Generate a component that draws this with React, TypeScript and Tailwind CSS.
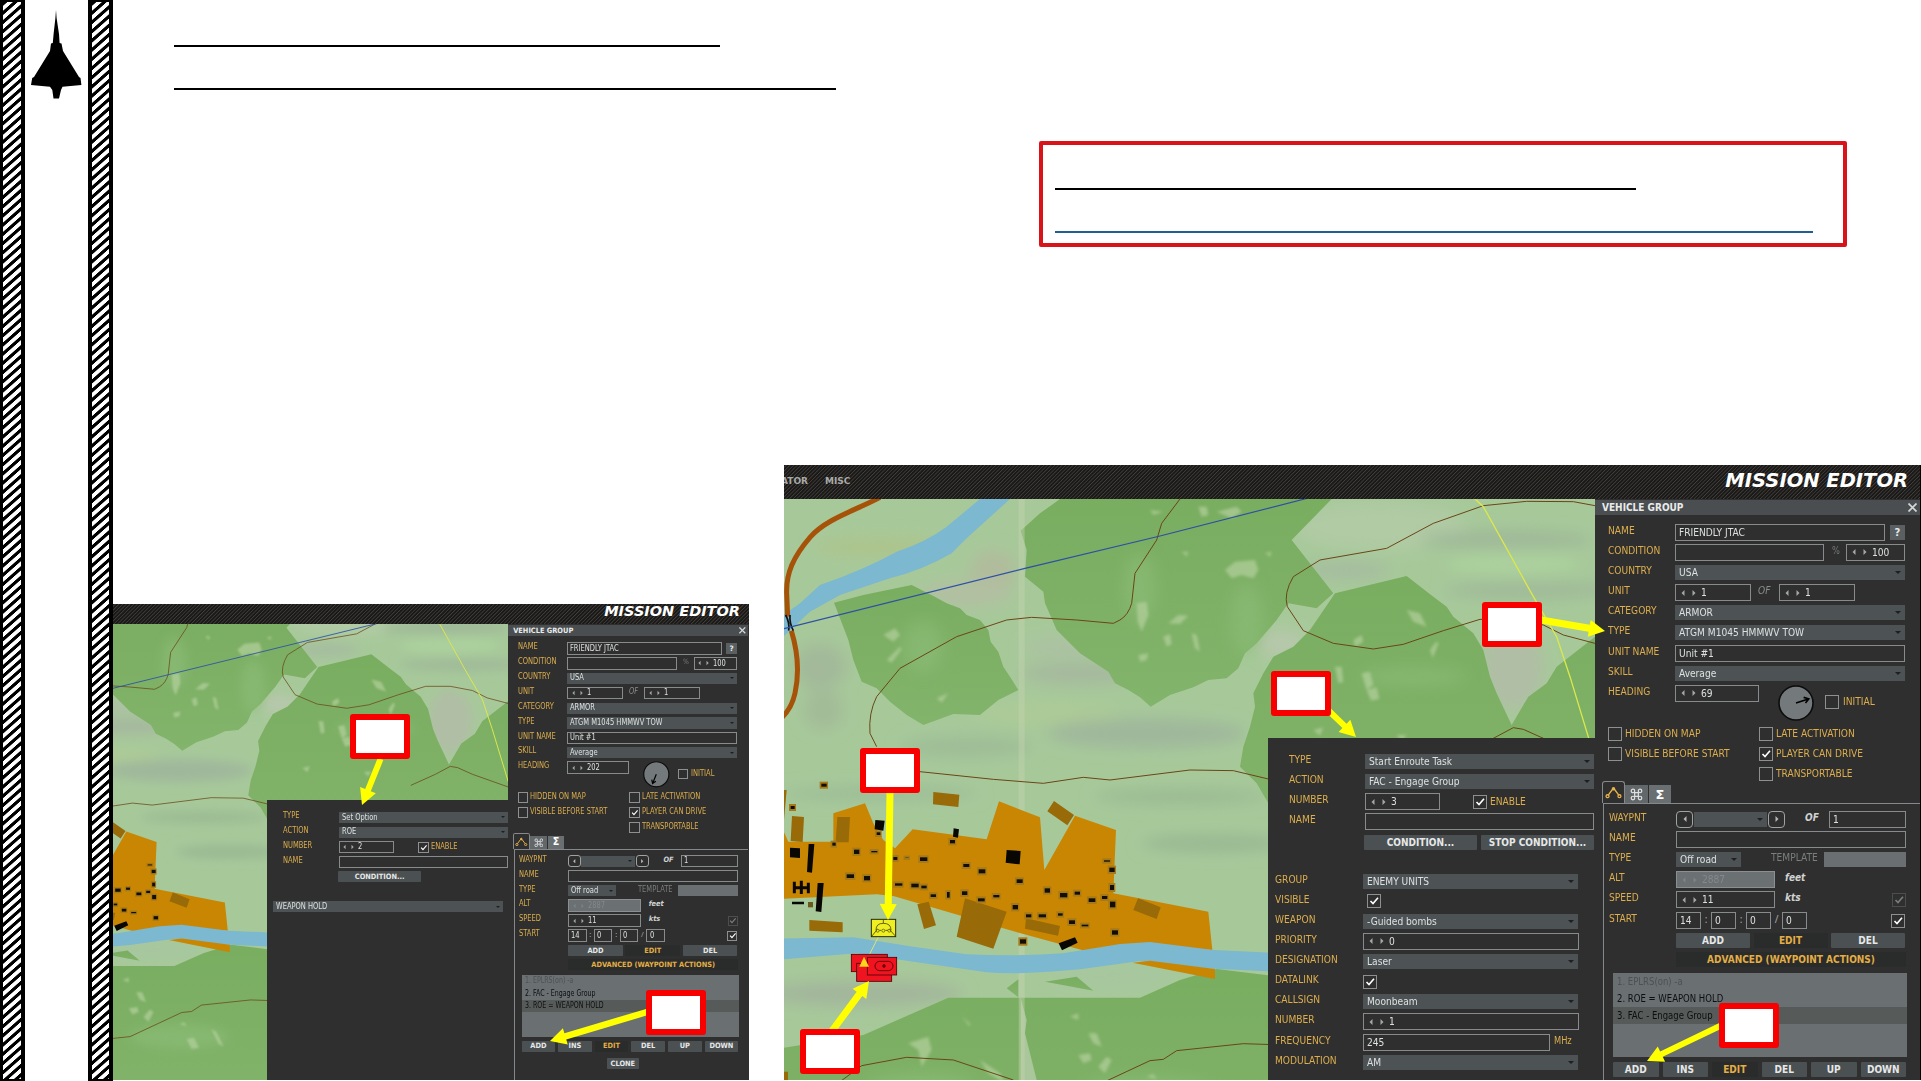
import React from "react";

const Check = ({ on, dim, className = "" }: { on?: boolean; dim?: boolean; className?: string }) => (
  <span className={`flex size-[14px] shrink-0 items-center justify-center border ${dim ? "border-[#4c4e4e]" : "border-[#8d9090]"} ${className}`}>
    {on && (
      <svg viewBox="0 0 10 10" className="size-[10px]" fill="none" stroke={dim ? "#7b7e7e" : "#ffffff"} strokeWidth="1.6">
        <path d="M1.5 5 L4 7.6 L9 1.8" />
      </svg>
    )}
  </span>
);

const Txt = ({ children, className = "" }: { children: React.ReactNode; className?: string }) => (
  <span className={`block origin-left scale-x-[0.92] whitespace-pre font-['DejaVu_Sans_Condensed','DejaVu_Sans',sans-serif] text-[11px] leading-[13px] [font-stretch:condensed] ${className}`}>{children}</span>
);

const Label = ({ children, w = "w-[67px]" }: { children: React.ReactNode; w?: string }) => (
  <span className={`${w} shrink-0`}>
    <Txt className="text-[#dcae4e]">{children}</Txt>
  </span>
);

const Select = ({ text, w }: { text?: string; w: string }) => (
  <span className={`mt-px flex h-[15px] shrink-0 items-center justify-between bg-[#4d5355] px-[4px] ${w}`}>
    <Txt className="text-[#dde0e0]">{text}</Txt>
    <i className="h-0 w-0 border-x-[3px] border-t-[3px] border-x-transparent border-t-[#1d1f20]" />
  </span>
);

const Field = ({ text, w }: { text?: string; w: string }) => (
  <span className={`flex h-[17px] shrink-0 items-center border border-[#888b8b] pl-[3px] ${w}`}>
    <Txt className="text-[#dde0e0]">{text}</Txt>
  </span>
);

const Spin = ({ text, w, off }: { text: string; w: string; off?: boolean }) => (
  <span className={`flex h-[17px] shrink-0 items-center border pl-[5px] ${off ? "border-[#8b8f91] bg-[#6b7073] text-[#84898b]" : "border-[#888b8b] text-[#dde0e0]"} ${w}`}>
    <svg viewBox="0 0 16 8" className="mr-[4px] h-[8px] w-[16px] shrink-0" fill={off ? "#7d8284" : "#a5a8a8"}>
      <path d="M3.5 1 L0.5 4 L3.5 7Z M11.5 1 L14.5 4 L11.5 7Z" />
    </svg>
    <Txt>{text}</Txt>
  </span>
);

const Btn = ({ children, w = "", gold }: { children: React.ReactNode; w?: string; gold?: boolean }) => (
  <span className={`flex h-[15px] shrink-0 items-center justify-center rounded-[1px] font-['DejaVu_Sans_Condensed','DejaVu_Sans',sans-serif] text-[10px] leading-[13px] font-bold whitespace-nowrap [font-stretch:condensed] ${gold ? "bg-[#2a2b2b] text-[#e3ae45]" : "bg-[#4b5052] text-[#e6e8e8]"} ${w}`}>{children}</span>
);

const Row = ({ children, className = "" }: { children: React.ReactNode; className?: string }) => (
  <div className={`flex h-[20.15px] items-start ${className}`}>{children}</div>
);

const CheckLine = ({ text, on }: { text: string; on?: boolean }) => (
  <div className="flex h-[20.3px] items-start gap-[3px]">
    <Check on={on} />
    <Txt className="text-[#dcae4e]">{text}</Txt>
  </div>
);

const ArrowBtn = ({ d }: { d: string }) => (
  <span className="flex size-[17px] shrink-0 items-center justify-center rounded-[4px] border border-[#a0a3a3]">
    <svg viewBox="0 0 8 8" className="size-[6px]" fill="#b5b8b8"><path d={d} /></svg>
  </span>
);

const Unit = ({ children }: { children: React.ReactNode }) => (
  <span className="block font-['DejaVu_Sans_Condensed','DejaVu_Sans',sans-serif] text-[10px] leading-[13px] font-bold text-[#cfd2d2] italic [font-stretch:condensed]">{children}</span>
);

function VehiclePanel({ heading, angle, actions, clone }: { heading: string; angle: number; actions: string[]; clone?: boolean }) {
  return (
    <div className="flex h-[653px] w-[325px] shrink-0 flex-col bg-[#2f2f2f]">
      <div className="mt-px flex h-[15px] shrink-0 items-center justify-between bg-[#4a4e50] pr-[3px] pl-[7px] font-['DejaVu_Sans_Condensed','DejaVu_Sans',sans-serif] text-[10px] font-bold text-[#e9ebeb] [font-stretch:condensed]">
        VEHICLE GROUP
        <svg viewBox="0 0 9 9" className="size-[9px]" stroke="#d5d8d8" strokeWidth="1.7"><path d="M0.5 0.5 L8.5 8.5 M8.5 0.5 L0.5 8.5" /></svg>
      </div>
      <div className="mt-[8.7px] flex flex-col pl-[13px]">
        <Row><Label>NAME</Label><Field text="FRIENDLY JTAC" w="w-[210px]" /><span className="mt-px ml-[5px] flex h-[15px] w-[15px] items-center justify-center bg-[#5a5f62] font-['DejaVu_Sans',sans-serif] text-[10px] font-bold text-[#e6e8e8]">?</span></Row>
        <Row><Label>CONDITION</Label><Field w="w-[149px]" /><span className="w-[22px] pl-[8px]"><Txt className="text-[10px]! text-[#767979]">%</Txt></span><Spin text="100" w="w-[59px]" /></Row>
        <Row><Label>COUNTRY</Label><Select text="USA" w="w-[230px]" /></Row>
        <Row><Label>UNIT</Label><Spin text="1" w="w-[76px]" /><span className="w-[28px] pl-[7px]"><Txt className="text-[#8a8d8d] italic">OF</Txt></span><Spin text="1" w="w-[76px]" /></Row>
        <Row><Label>CATEGORY</Label><Select text="ARMOR" w="w-[230px]" /></Row>
        <Row><Label>TYPE</Label><Select text="ATGM M1045 HMMWV TOW" w="w-[230px]" /></Row>
        <Row><Label>UNIT NAME</Label><Field text="Unit #1" w="w-[230px]" /></Row>
        <Row><Label>SKILL</Label><Select text="Average" w="w-[230px]" /></Row>
        <div className="flex h-[42px] items-start">
          <Label>HEADING</Label>
          <Spin text={heading} w="w-[84px]" />
          <svg viewBox="-18 -18 36 36" className="mr-[11px] ml-[19px] size-[36px]">
            <circle r="17" fill="#747a7c" stroke="#0c0c0c" strokeWidth="1.6" />
            <g transform={`rotate(${angle})`}><path d="M0 0 H13 M9 -3 L13.5 0 L9 3" fill="none" stroke="#000" strokeWidth="1.6" /></g>
          </svg>
          <Check className="mt-[10px] mr-[4px]" />
          <Txt className="mt-[10px] text-[#dcae4e]">INITIAL</Txt>
        </div>
        <div className="flex h-[54.5px]">
          <div className="w-[151px]"><CheckLine text="HIDDEN ON MAP" /><CheckLine text="VISIBLE BEFORE START" /></div>
          <div><CheckLine text="LATE ACTIVATION" /><CheckLine text="PLAYER CAN DRIVE" on /><CheckLine text="TRANSPORTABLE" /></div>
        </div>
      </div>
      <div className="flex h-[22px] items-end pl-[7px]">
        <span className="flex h-full w-[23px] items-center justify-center rounded-t-[3px] border border-b-0 border-[#86898a]">
          <svg viewBox="0 0 18 14" className="h-[13px] w-[17px]" fill="none" stroke="#e9b548" strokeWidth="1.4"><path d="M3.5 9.5 L8 3.5 H10 L14.5 9.5" /><circle cx="9" cy="3" r="1.2" fill="#e9b548" /><circle cx="2.6" cy="11" r="1.6" /><circle cx="15.4" cy="11" r="1.6" /></svg>
        </span>
        <span className="flex h-[18px] w-[23px] items-center justify-center bg-[#62676a]">
          <svg viewBox="0 0 14 14" className="size-[13px]" fill="none" stroke="#dfe1e1" strokeWidth="1.3"><path d="M5 5 H9 V9 H5Z" /><circle cx="3.2" cy="3.2" r="1.9" /><circle cx="10.8" cy="3.2" r="1.9" /><circle cx="3.2" cy="10.8" r="1.9" /><circle cx="10.8" cy="10.8" r="1.9" /></svg>
        </span>
        <span className="ml-px flex h-[18px] w-[22px] items-center justify-center bg-[#6a6f72] font-['DejaVu_Sans',sans-serif] text-[13px] font-bold text-white">Σ</span>
      </div>
      <div className="ml-[8px] flex grow flex-col border-t border-l border-[#85888a] pt-[6.5px] pl-[5px]">
        <Row><Label>WAYPNT</Label><ArrowBtn d="M6 0 L2 4 L6 8Z" /><span className="mx-px"><Select w="w-[73px]" /></span><ArrowBtn d="M2 0 L6 4 L2 8Z" /><span className="w-[44px] pl-[20px]"><Unit>OF</Unit></span><Field text="1" w="w-[77px]" /></Row>
        <Row><Label>NAME</Label><Field w="w-[230px]" /></Row>
        <Row><Label>TYPE</Label><Select text="Off road" w="w-[65px]" /><span className="w-[83px] pl-[30px]"><Txt className="text-[#7b7e7e]">TEMPLATE</Txt></span><span className="mt-px h-[15px] w-[82px] bg-[#6a6f72]" /></Row>
        <Row><Label>ALT</Label><Spin text="2887" w="w-[99px]" off /><span className="pl-[10px]"><Unit>feet</Unit></span></Row>
        <Row><Label>SPEED</Label><Spin text="11" w="w-[99px]" /><span className="w-[117px] pl-[10px]"><Unit>kts</Unit></span><Check on dim className="mt-[2px]" /></Row>
        <Row className="h-[20.6px]!"><Label>START</Label><Field text="14" w="w-[25px]" /><span className="w-[10px] text-center text-[10px] text-[#a5a8a8]">:</span><Field text="0" w="w-[25px]" /><span className="w-[10px] text-center text-[10px] text-[#a5a8a8]">:</span><Field text="0" w="w-[25px]" /><span className="w-[11px] text-center text-[10px] text-[#a5a8a8]">/</span><Field text="0" w="w-[25px]" /><Check on className="mt-[2px] ml-[84px]" /></Row>
        <div className="mt-px ml-[67px] flex gap-[3.5px]"><Btn w="w-[74px]">ADD</Btn><Btn w="w-[74px]" gold>EDIT</Btn><Btn w="w-[74px]">DEL</Btn></div>
        <div className="mt-[4px] ml-[67px]"><Btn w="w-[230px]" gold>ADVANCED (WAYPOINT ACTIONS)</Btn></div>
        <div className="mt-[6px] ml-[4px] h-[84px] w-[294px] shrink-0 bg-[#6a6f72]">
          {actions.map((a, i) => (
            <div key={a} className={`flex h-[17px] items-center pl-[4px] ${i === 2 ? "bg-[#565b5a]" : ""} ${i === 0 ? "text-[#4c5154]" : "text-[#0d0e0e]"}`}><Txt className="scale-x-[0.86]!">{a}</Txt></div>
          ))}
        </div>
        <div className="mt-[5px] ml-[4px] grid w-[293px] grid-cols-6 gap-[4px]">
          <Btn>ADD</Btn><Btn>INS</Btn><Btn gold>EDIT</Btn><Btn>DEL</Btn><Btn>UP</Btn><Btn>DOWN</Btn>
        </div>
        {clone && <div className="mt-[9px] ml-[119px]"><Btn w="w-[44px]">CLONE</Btn></div>}
      </div>
    </div>
  );
}

const TaskTop = ({ type, action, number, stop }: { type: string; action: string; number: string; stop?: boolean }) => (
  <div className="flex h-[121px] flex-col pl-[21px]">
    <Row><Label w="w-[76px]">TYPE</Label><Select text={type} w="w-[229px]" /></Row>
    <Row><Label w="w-[76px]">ACTION</Label><Select text={action} w="w-[229px]" /></Row>
    <Row><Label w="w-[76px]">NUMBER</Label><Spin text={number} w="w-[75px]" /><Check on className="mt-[2px] mr-[3px] ml-[33px]" /><Txt className="mt-[2px] text-[#dcae4e]">ENABLE</Txt></Row>
    <Row><Label w="w-[76px]">NAME</Label><Field w="w-[229px]" /></Row>
    <div className="mt-px ml-[75px] flex gap-[4px]"><Btn w="w-[113px]">CONDITION...</Btn>{stop && <Btn w="w-[113px]">STOP CONDITION...</Btn>}</div>
  </div>
);

const GL = ({ children }: { children: React.ReactNode }) => <Label w="w-[88px]">{children}</Label>;

function EngageDialog() {
  return (
    <div className="h-[342px] w-[327px] bg-[#2f2f2f] pt-[15px]">
      <TaskTop type="Start Enroute Task" action="FAC - Engage Group" number="3" stop />
      <div className="-mt-[1.5px] flex flex-col pl-[7px]">
        <Row><GL>GROUP</GL><Select text="ENEMY UNITS" w="w-[215px]" /></Row>
        <Row><GL>VISIBLE</GL><Check on className="mt-px ml-[4px]" /></Row>
        <Row><GL>WEAPON</GL><Select text="-Guided bombs" w="w-[215px]" /></Row>
        <Row><GL>PRIORITY</GL><Spin text="0" w="w-[216px]" /></Row>
        <Row><GL>DESIGNATION</GL><Select text="Laser" w="w-[215px]" /></Row>
        <Row><GL>DATALINK</GL><Check on className="mt-[2px]" /></Row>
        <Row><GL>CALLSIGN</GL><Select text="Moonbeam" w="w-[215px]" /></Row>
        <Row><GL>NUMBER</GL><Spin text="1" w="w-[216px]" /></Row>
        <Row><GL>FREQUENCY</GL><Field text="245" w="w-[187px]" /><span className="pl-[4px]"><Txt className="text-[10px]! text-[#dcae4e]">MHz</Txt></span></Row>
        <Row><GL>MODULATION</GL><Select text="AM" w="w-[215px]" /></Row>
      </div>
    </div>
  );
}

function OptionDialog() {
  return (
    <div className="h-[380px] w-[327px] bg-[#2f2f2f] pt-[15px]">
      <TaskTop type="Set Option" action="ROE" number="2" />
      <div className="pl-[8px]"><Select text="WEAPON HOLD" w="w-[311px]" /></div>
    </div>
  );
}

const houses: [number, number, number, number][] = [
  [122, 38, 18, 14], [30, 105, 14, 14], [155, 215, 12, 14], [220, 236, 18, 18], [272, 240, 20, 9], [288, 184, 13, 13], [508, 207, 17, 15], [338, 258, 14, 14],
  [374, 260, 12, 6], [418, 259, 24, 16], [548, 279, 20, 14], [594, 295, 22, 17], [708, 325, 20, 16], [198, 310, 24, 16], [250, 315, 20, 18], [343, 337, 24, 12],
  [392, 338, 24, 16], [422, 344, 18, 13], [450, 370, 18, 13], [499, 363, 10, 22], [544, 361, 18, 16], [592, 382, 22, 14], [638, 372, 20, 12], [696, 402, 18, 18],
  [736, 430, 18, 14], [774, 430, 24, 14], [792, 352, 18, 18], [838, 366, 24, 18], [882, 362, 18, 14], [924, 382, 22, 16], [964, 375, 18, 14], [988, 342, 14, 20],
  [988, 392, 18, 22], [970, 268, 20, 9], [986, 290, 18, 18], [832, 427, 16, 12], [865, 448, 20, 16], [903, 461, 22, 10], [994, 478, 20, 18], [718, 505, 20, 18],
];

const specks = [
  "M1335 330 l30 -25 60 -5 10 30 -15 25 -35 -10 -30 10z", "M1070 430 l30 -5 5 40 -20 50 -12 -30z", "M1165 490 l30 -25 30 2 -25 25z", "M1150 530 l20 -8 5 30 -15 8z",
  "M1235 520 l15 5 10 50 -15 -10z", "M1075 585 l30 -5 -5 20 -20 5z", "M310 525 l35 -20 15 20 -20 20z", "M320 600 l40 -40 5 8 -30 40z", "M470 715 l35 -15 -20 28z", "M1110 150 l40 5 -30 10z",
  "M1255 140 l25 0 5 25 -20 5z", "M1310 155 l60 -15 15 15 -30 20z", "M1205 275 l20 0 -5 15z", "M1455 280 l20 -5 -5 15z", "M1880 450 l40 10 20 40 -40 -15z", "M1720 540 l25 -15 5 20 -25 15z",
  "M1950 570 l18 -25 8 5 -18 45z", "M1665 620 l20 0 5 45 -15 5z", "M1745 640 l25 -5 10 40 -20 15z", "M1760 690 l30 -8 8 35 -25 5z", "M1600 810 l30 -8 -10 25z", "M1850 825 l30 0 -15 18z",
  "M385 1750 l60 -20 10 40 -30 50 -10 -50z", "M870 1670 l25 -10 0 20z", "M925 1720 l25 0 15 40 -25 -10z", "M895 1785 l35 -5 5 20 -25 10z", "M955 1820 l25 -30 15 10 -20 40z", "M1100 1850 l20 -8 10 15z",
  "M545 1670 l25 20 0 10z", "M600 1800 l60 40 15 30 -50 -30z", "M1130 1910 l30 -5 20 40 -30 5z", "M1230 1870 l20 10 30 60 -20 -10z",
];

function TerrainMap({ box, className, id, route }: { box: string; className: string; id: string; route: string }) {
  return (
    <svg viewBox={box} preserveAspectRatio="none" className={className}>
      <defs>
        <filter id={id} x="-40%" y="-40%" width="180%" height="180%"><feGaussianBlur stdDeviation="22" /></filter>
        <filter id={`${id}s`} x="-10%" y="-10%" width="120%" height="120%"><feGaussianBlur stdDeviation="4" /></filter>
        <linearGradient id={`${id}f`} x1="0" y1="0" x2="0" y2="1"><stop offset="0" stopColor="#79ad60" /><stop offset="1" stopColor="#82b46b" /></linearGradient>
      </defs>
      <rect x="780" y="400" width="900" height="800" fill="#a7c99a" />
      <g transform="translate(780 460) scale(.33333)">
        <g filter={`url(#${id})`}>
          <ellipse cx="640" cy="330" rx="70" ry="60" fill="#b1bc9c" />
          <ellipse cx="300" cy="260" rx="200" ry="30" fill="#adc48c" />
          <ellipse cx="120" cy="620" rx="80" ry="70" fill="#a3b99a" />
          <ellipse cx="130" cy="750" rx="60" ry="60" fill="#a3bb98" />
          <ellipse cx="560" cy="400" rx="140" ry="40" fill="#b2bfa2" />
          <ellipse cx="900" cy="640" rx="180" ry="35" fill="#a6b99e" />
          <ellipse cx="850" cy="560" rx="120" ry="25" fill="#adc0a4" />
          <ellipse cx="1100" cy="820" rx="300" ry="45" fill="#9fb79b" />
          <ellipse cx="560" cy="860" rx="200" ry="35" fill="#9fbd97" />
          <ellipse cx="800" cy="760" rx="220" ry="25" fill="#aecb96" />
          <ellipse cx="1800" cy="200" rx="260" ry="70" fill="#b1cba5" />
          <ellipse cx="2180" cy="240" rx="260" ry="28" fill="#9eb798" />
          <ellipse cx="2200" cy="310" rx="200" ry="40" fill="#acd09d" />
          <ellipse cx="2250" cy="390" rx="260" ry="24" fill="#9fb899" />
          <ellipse cx="1700" cy="330" rx="130" ry="26" fill="#a6bba0" />
          <ellipse cx="2200" cy="620" rx="90" ry="130" fill="#b0bea5" />
          <ellipse cx="1500" cy="550" rx="80" ry="40" fill="#b7c8ac" />
          <ellipse cx="1200" cy="1010" rx="260" ry="22" fill="#9ab892" />
          <ellipse cx="1300" cy="1150" rx="220" ry="26" fill="#98b893" />
          <ellipse cx="300" cy="1000" rx="300" ry="20" fill="#9cbb96" />
          <ellipse cx="250" cy="1600" rx="300" ry="40" fill="#a3b69b" />
          <ellipse cx="1000" cy="1550" rx="180" ry="30" fill="#a7c6a0" />
        </g>
        <g fill={`url(#${id}f)`}>
          <path d="M162 428 L250 405 L395 375 L460 408 L500 430 L540 445 L560 465 L600 480 L625 510 L632 545 L655 575 L670 620 L690 650 L715 690 L655 720 L600 765 L520 762 L430 795 L380 765 L330 725 L290 685 L245 665 L220 600 L205 540Z" />
          <path d="M840 117 H1655 L1535 240 L1660 400 L1610 445 L1525 430 L1490 480 L1430 550 L1395 580 L1375 625 L1340 655 L1285 660 L1240 682 L1170 705 L1112 740 L1080 712 L1045 690 L1005 670 L985 635 L900 580 L830 510 L795 430 L790 395 L735 350 L740 270 L722 212 L780 160Z" />
          <path d="M1665 400 L1880 348 L1960 410 L2000 440 L2020 470 L2080 520 L2110 570 L2130 650 L2150 700 L2195 795 L2245 710 L2300 670 L2330 620 L2445 530 V1150 H1640 L1465 1030 L1430 970 L1380 920 L1390 860 L1410 800 L1425 740 L1420 700 L1450 640 L1480 590 L1540 560 L1590 510Z" />
          <path d="M0 1765 L250 1725 L505 1613 H1080 L1200 1560 L1310 1527 L1480 1548 V2200 H0Z" />
          <path d="M680 1585 L715 1558 V1612Z M795 1565 L890 1550 L940 1592Z" />
        </g>
        <g fill="#8dbd79" opacity="0.6" filter={`url(#${id})`}>
          <ellipse cx="1400" cy="480" rx="50" ry="110" /><ellipse cx="1080" cy="380" rx="50" ry="100" /><ellipse cx="1900" cy="650" rx="160" ry="30" /><ellipse cx="420" cy="1880" rx="160" ry="40" /><ellipse cx="1100" cy="1900" rx="200" ry="50" /><ellipse cx="430" cy="560" rx="60" ry="80" />
        </g>
        <g fill="#b4d09d" opacity="0.7" filter={`url(#${id}s)`}>{specks.map((d) => <path key={d} d={d} />)}</g>
        <path d="M722 1613 L740 1680 L735 1720 L770 1860 H722Z" fill="#a9c79a" />
        <rect x="716" y="117" width="18" height="1750" fill="#c6d5b0" opacity="0.42" />
        <path d="M600 117 H690 L560 235 L515 280 Q430 330 330 355 L180 405 L90 455 L10 530 V465 L60 430 L120 375 Q250 330 350 275 Q440 245 500 200Z" fill="#7cb8cf" />
        <path d="M300 112 C230 150 140 175 90 232 C40 290 18 340 20 400 L23 470 M34 512 C55 580 58 640 45 700 Q35 745 6 772" fill="none" stroke="#a65208" strokeWidth="15" />
        <path d="M17 465 Q30 490 26 512 M30 465 Q28 490 40 512" stroke="#111" strokeWidth="5" fill="none" />
        <g fill="none" stroke="#6a4416" strokeWidth="3">
          <path d="M1200 117 L1145 190 L1130 240 L1065 340 L1055 430 Q1045 465 1020 480 L1000 490 L890 480 L755 472 L680 480 L530 530 L360 625 L290 710 Q265 760 270 820 L290 860" />
          <path d="M420 935 L640 958 L790 970 L910 952 L990 960 L1230 930 L1360 932 L1465 957" />
          <path d="M2445 137 L2380 125 L2240 124 L2110 137 L1960 190 L1820 265 L1620 300 L1540 350 Q1510 400 1522 440 L1570 512 L1660 550 L1780 567 L1870 553 L1990 512 L2100 478 L2200 478 L2290 495 L2350 525 L2445 550" />
          <path d="M2040 880 L2140 835 L2200 803 L2230 808 L2290 835 L2445 890" />
          <path d="M160 1880 L245 1817 L380 1792 L520 1800 L700 1860 M831 1907 L900 1900 L1110 1802 L1150 1798 L1190 1772 L1390 1751 L1480 1754" />
        </g>
        <path d={route} fill="none" stroke="#2c4fa6" strokeWidth="3.5" />
        <path d="M2085 117 L2110 140 L2260 410 L2330 530 L2370 650 L2440 880" fill="none" stroke="#dbe84c" strokeWidth="4" />
      </g>
      <g transform="translate(780 770) scale(.33333)">
        <path d="M0 160 L25 215 H160 V130 L255 100 L280 160 L310 210 L345 235 L398 178 L620 208 L657 94 L780 142 L793 300 L885 137 L1008 180 L1000 370 L1285 425 L1297 540 L1110 525 L925 545 L680 478 L535 435 L340 378 L290 373 L0 387Z" fill="#c98602" />
        <g fill="#986a08">
          <path d="M36 138 L72 141 L68 216 L32 213Z M172 141 H210 L206 217 H167Z M460 66 L538 74 L535 111 L459 103Z M822 93 L882 135 L862 166 L802 124Z M555 385 L680 425 L640 536 L530 500Z M412 403 L446 395 L468 466 L432 477Z M88 450 L188 457 V487 L88 482Z M738 445 L840 468 L834 497 L735 476Z M1074 385 L1142 412 L1130 447 L1060 420Z M0 60 L20 60 L12 150 H0Z M0 905 H24 V950 H0Z" />
        </g>
        <path d="M0 506 L220 502 L400 530 L560 553 Q720 560 850 550 L1020 522 L1110 516 L1300 540 L1500 549 V606 L1270 595 L1080 573 L900 598 Q720 615 620 607 L400 575 L230 550 L0 569Z" fill="#7cb8cf" />
        <path d="M1058 578 L1110 572 L1305 597 V627Z" fill="#c98602" />
        {houses.map(([x, y, w, h]) => (
          <g key={`${x}-${y}`}>
            <rect x={x - 3} y={y - 3} width={w + 7} height={h + 7} fill="#a67a18" />
            <rect x={x + 2} y={y + 3} width={w - 2} height={h - 5} fill="#120e04" />
          </g>
        ))}
        <path d="M286 150 L314 152 L310 182 L284 178Z M521 175 L537 178 L534 203 L519 200Z M680 240 L722 243 L719 283 L677 278Z M30 233 L60 235 V264 L30 262Z M86 222 L103 222 L96 308 L81 306Z M113 339 L131 339 L124 426 L107 424Z M836 520 L885 502 L893 518 L846 541Z M36 395 H72 V403 H36Z" fill="#080704" />
        <path d="M43 335 V370 M64 332 V372 M85 338 V370 M40 353 H88" stroke="#080704" strokeWidth="9" fill="none" />
        <path d="M84 396 h15 v16 h-15z" fill="#6b5a20" />
        <path d="M295 501 L265 560" stroke="#d9e27a" strokeWidth="3" />
        <rect x="274" y="448" width="73" height="52" fill="#eeee22" stroke="#2a2a00" strokeWidth="3" />
        <path d="M276 498 L292 478 M328 478 L346 498 M288 480 Q288 460 310 460 Q333 460 333 480 M310 450 V460 M298 481 H304 M316 481 H324" fill="none" stroke="#4a4a00" strokeWidth="2.5" />
        <g fill="none" stroke="#4a4a00" strokeWidth="2"><circle cx="293" cy="482" r="4.5" /><circle cx="310" cy="482" r="4.5" /><circle cx="328" cy="482" r="4.5" /></g>
        <g fill="#f01420" stroke="#4a0005" strokeWidth="2.5">
          <rect x="214" y="553" width="108" height="52" /><rect x="230" y="580" width="105" height="54" /><rect x="262" y="562" width="88" height="53" />
          <rect x="285" y="574" width="54" height="28" rx="14" fill="none" />
        </g>
        <path d="M306 588 H318 M312 582 V594" stroke="#400" strokeWidth="3.5" />
        <path d="M252 560 L267 590 H238Z" fill="#ffd21c" />
      </g>
    </svg>
  );
}

const Arrow = ({ x1, y1, x2, y2, w = 7 }: { x1: number; y1: number; x2: number; y2: number; w?: number }) => {
  const len = Math.hypot(x2 - x1, y2 - y1);
  const a = (Math.atan2(y2 - y1, x2 - x1) * 180) / Math.PI;
  const h = w / 2;
  return <path transform={`translate(${x1} ${y1}) rotate(${a})`} d={`M0 ${-h} H${len - 16} V-8.5 L${len} 0 L${len - 16} 8.5 V${h} H0Z`} fill="#ffff00" />;
};

const Callout = ({ at }: { at: string }) => <div className={`absolute h-[45px] w-[60px] rounded-[3px] border-[6px] border-[#f80000] bg-white ${at}`} />;

const mesh = "bg-[repeating-linear-gradient(135deg,#1a1917_0px,#1a1917_1.1px,#42403d_1.7px,#1a1917_2.6px)]";

const Title = ({ className = "" }: { className?: string }) => (
  <span className={`font-['DejaVu_Sans',sans-serif] text-[19.5px] leading-none font-bold whitespace-nowrap text-white italic ${className}`}>MISSION EDITOR</span>
);

function SmallShot() {
  return (
    <div className="relative flex h-[476px] w-[636px] flex-col overflow-hidden bg-[#2f2f2f]">
      <div className={`flex h-[20px] shrink-0 items-start justify-end pr-[9px] ${mesh}`}>
        <Title className="text-[14.5px]!" />
      </div>
      <div className="flex h-[456px]">
        <div className="relative h-full w-[395px] shrink-0">
          <TerrainMap id="ms" box="1057 535 534.5 617" className="h-full w-full" route="M831 486 L1907 222" />
          <div className="absolute top-[176px] left-[154px]"><div className="[zoom:0.739]"><OptionDialog /></div></div>
        </div>
        <div className="[zoom:0.7395]">
          <VehiclePanel heading="202" angle={112} clone actions={["1. EPLRS(on) -a", "2. FAC - Engage Group", "3. ROE = WEAPON HOLD"]} />
        </div>
      </div>
      <svg viewBox="113 604 636 476" className="absolute inset-0 h-full w-full">
        <Arrow x1={380.5} y1={759} x2={362} y2={805} w={6} />
        <Arrow x1={647} y1={1012} x2={550} y2={1041} w={6.5} />
      </svg>
      <Callout at="left-[237px] top-[110px]" />
      <Callout at="left-[533px] top-[386px]" />
    </div>
  );
}

function LargeShot() {
  return (
    <div className="relative flex h-[615px] w-[1137px] flex-col overflow-hidden border-r border-black bg-[#2f2f2f]">
      <div className={`flex h-[34px] shrink-0 items-center justify-between pr-[12px] ${mesh}`}>
        <div className="flex gap-[17px] font-['DejaVu_Sans',sans-serif] text-[9px] font-bold text-[#a9a9a7]"><span className="-ml-[3px]">ATOR</span><span>MISC</span></div>
        <Title className="-mt-[2px]" />
      </div>
      <div className="flex h-[581px]">
        <div className="relative h-full w-[811px] shrink-0">
          <TerrainMap id="ml" box="784 499 811 581" className="h-full w-full" route="M12 506 L735 325 L1140 228 L1640 100" />
          <div className="absolute top-[239px] left-[484px]"><EngageDialog /></div>
        </div>
        <VehiclePanel heading="69" angle={-18} actions={["1. EPLRS(on) -a", "2. ROE = WEAPON HOLD", "3. FAC - Engage Group"]} />
      </div>
      <svg viewBox="784 465 1136 615" className="absolute inset-0 h-full w-full">
        <Arrow x1={890} y1={792} x2={888} y2={920} />
        <Arrow x1={832} y1={1031} x2={869} y2={981} />
        <Arrow x1={1329} y1={711} x2={1356} y2={737} w={6} />
        <Arrow x1={1541} y1={620} x2={1605} y2={631} />
        <Arrow x1={1720} y1={1026} x2={1647} y2={1061} w={6} />
      </svg>
      <Callout at="left-[76px] top-[283px]" />
      <Callout at="left-[16px] top-[564px]" />
      <Callout at="left-[487px] top-[206px]" />
      <Callout at="left-[698px] top-[137px]" />
      <Callout at="left-[935px] top-[538px]" />
    </div>
  );
}

const Hatch = ({ className }: { className: string }) => (
  <div className={`h-[1081px] border-y-2 border-black bg-[repeating-linear-gradient(138.5deg,#000_0px,#000_2.6px,#fff_3.2px,#fff_6.3px,#000_6.9px)] ${className}`} />
);

export default function App() {
  return (
    <div className="flex h-[1081px] w-[1921px] overflow-hidden bg-white">
      <div className="flex w-[113px] shrink-0">
        <Hatch className="w-[25px] border-r-4 border-l-[3px]" />
        <div className="flex w-[63px] justify-center pt-[10px] pr-[2px]">
          <svg viewBox="0 0 52 90" className="h-[90px] w-[52px]">
            <path d="M26 0 L26.6 8 L29 24 L29.6 33 L31.5 33.5 L33 41 L49 67 L50.5 68 L51.4 75 L32.5 76.8 L31 80 L29 88.5 H23.5 L22.3 80 L20 76.8 L1 75 L2.2 68 L4 67 L20 41 L21 33.5 L22.8 33 L23.6 24 L25.4 8Z" fill="#000" />
          </svg>
        </div>
        <Hatch className="w-[25px] border-r-4 border-l-4" />
      </div>
      <div className="flex w-[1808px] flex-col">
        <div className="flex h-[465px] shrink-0 items-start pl-[61px]">
          <div className="flex w-[865px] flex-col gap-[41px] pt-[45px]">
            <div className="h-[2px] w-[546px] bg-black" />
            <div className="h-[2px] w-[662px] bg-black" />
          </div>
          <div className="mt-[141px] flex h-[106px] w-[808px] flex-col gap-[41px] rounded-[2px] border-4 border-[#d8141a] pt-[43px] pl-[12px]">
            <div className="h-[2px] w-[581px] bg-black" />
            <div className="h-[2px] w-[758px] bg-[#1f5f92]" />
          </div>
        </div>
        <div className="flex h-[615px] items-end gap-[35px]">
          <SmallShot />
          <LargeShot />
        </div>
      </div>
    </div>
  );
}
